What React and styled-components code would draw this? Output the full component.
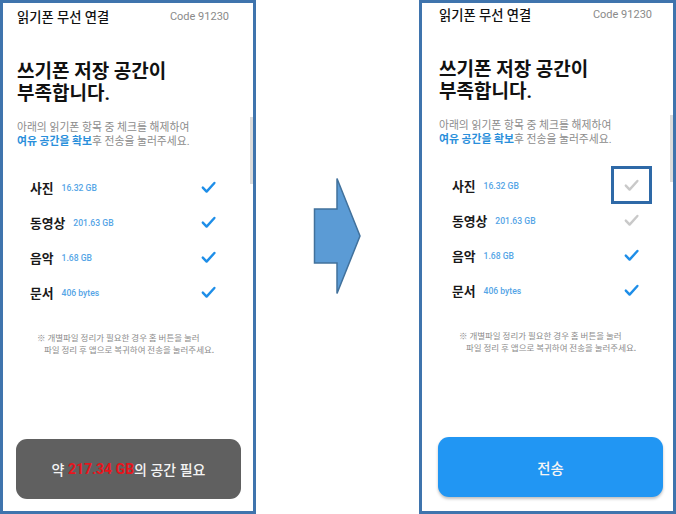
import React from "react";
import styled, { createGlobalStyle } from "styled-components";

const Global = createGlobalStyle`
  html, body { margin: 0; padding: 0; background: #ffffff; }
  body { font-family: Roboto, "Noto Sans CJK KR", sans-serif; }
  * { box-sizing: border-box; }
`;

const Stage = styled.div`
  display: flex;
  flex-direction: row;
  width: 676px;
  height: 514px;
  background: #ffffff;
`;

const Phone = styled.div`
  position: relative;
  width: ${(p) => p.$w}px;
  height: 514px;
  border: 3px solid #3f74ad;
  background: #ffffff;
  display: flex;
  flex-direction: column;
  padding: ${(p) => p.$top}px ${(p) => p.$padR}px 0 ${(p) => p.$padL}px;
  overflow: hidden;
  flex-shrink: 0;
`;

const ScrollThumb = styled.div`
  position: absolute;
  right: 0;
  top: ${(p) => p.$y}px;
  width: 3px;
  height: 67px;
  background: #dcdcdc;
`;

const Header = styled.div`
  display: flex;
  justify-content: space-between;
  align-items: center;
  height: 20px;
`;

const HeaderTitle = styled.span`
  font-size: 13.3px;
  font-weight: 500;
  color: #111111;
`;

const Code = styled.span`
  font-family: Roboto, sans-serif;
  font-size: 11px;
  color: #8a8a8a;
`;

const Title = styled.h1`
  margin: 35px 0 0 0;
  font-size: 19px;
  line-height: 22px;
  font-weight: 700;
  color: #111111;
`;

const Subtitle = styled.p`
  margin: 16px 0 0 0;
  font-size: 10.8px;
  line-height: 14px;
  color: #8c8c8c;
  white-space: nowrap;
`;

const Highlight = styled.span`
  color: #2a8fdb;
  font-weight: 700;
`;

const List = styled.div`
  margin-top: 21px;
  display: flex;
  flex-direction: column;
  padding: 0 14px 0 13px;
`;

const Row = styled.div`
  display: flex;
  align-items: center;
  height: 35px;
`;

const Label = styled.span`
  font-size: 12.8px;
  font-weight: 700;
  color: #1a1a1a;
`;

const Size = styled.span`
  margin-left: 8px;
  font-family: Roboto, sans-serif;
  font-size: 8.6px;
  font-weight: 500;
  color: #55a5e6;
  flex: 1;
`;

const CheckWrap = styled.span`
  position: relative;
  display: flex;
  width: 13px;
  height: 11px;
`;

const FocusBox = styled.span`
  position: absolute;
  left: -14px;
  top: -14px;
  width: 41px;
  height: 38px;
  border: 3px solid #2e69a7;
`;

const Note = styled.div`
  margin-top: 21px;
  padding-left: 20px;
  font-family: "Noto Sans CJK KR", sans-serif;
  font-size: 8.5px;
  line-height: 12px;
  color: #8c8c8c;
  white-space: nowrap;
`;

const NoteLine = styled.div`
  padding-left: ${(p) => p.$indent}px;
`;

const Action = styled.div`
  margin: 84px 0 0 -1px;
  width: 225px;
  height: 60px;
  border-radius: 11px;
  display: flex;
  align-items: center;
  justify-content: center;
  background: ${(p) => (p.$variant === "blue" ? "#2196f3" : "#606060")};
  box-shadow: ${(p) =>
    p.$variant === "blue" ? "0 2px 3px rgba(0,0,0,0.25)" : "none"};
  color: #f4f4f4;
  font-size: ${(p) => (p.$variant === "blue" ? "14.4px" : "14px")};
  font-weight: 500;
  white-space: nowrap;
`;

const Red = styled.span`
  color: #e8141c;
  font-weight: 700;
`;

const ArrowCol = styled.div`
  flex: 1;
  display: flex;
  justify-content: center;
  align-items: flex-start;
  padding-top: 177px;
`;

const rows = [
  { label: "사진", size: "16.32 GB" },
  { label: "동영상", size: "201.63 GB" },
  { label: "음악", size: "1.68 GB" },
  { label: "문서", size: "406 bytes" },
];

function Check({ on }) {
  return (
    <svg width="13" height="11" viewBox="0 0 13 11" style={{ overflow: "visible" }}>
      <polyline
        points="0.8,5.6 4.6,9.6 12.4,1"
        fill="none"
        stroke={on ? "#1e8ee8" : "#c9c9c9"}
        strokeWidth="2.4"
        strokeLinecap="round"
        strokeLinejoin="round"
      />
    </svg>
  );
}

function Screen({ w, top, padL, padR, checks, focus, scrollY, variant }) {
  return (
    <Phone $w={w} $top={top} $padL={padL} $padR={padR}>
      <ScrollThumb $y={scrollY} />
      <Header>
        <HeaderTitle>읽기폰 무선 연결</HeaderTitle>
        <Code>Code 91230</Code>
      </Header>
      <Title>
        쓰기폰 저장 공간이
        <br />
        부족합니다.
      </Title>
      <Subtitle>
        아래의 읽기폰 항목 중 체크를 해제하여
        <br />
        <Highlight>여유 공간을 확보</Highlight>후 전송을 눌러주세요.
      </Subtitle>
      <List>
        {rows.map((r, i) => (
          <Row key={r.label}>
            <Label>{r.label}</Label>
            <Size>{r.size}</Size>
            <CheckWrap>
              <Check on={checks[i]} />
              {focus === i && <FocusBox />}
            </CheckWrap>
          </Row>
        ))}
      </List>
      <Note>
        <NoteLine $indent={0}>※ 개별파일 정리가 필요한 경우 홈 버튼을 눌러</NoteLine>
        <NoteLine $indent={7}>파일 정리 후 앱으로 복귀하여 전송을 눌러주세요.</NoteLine>
      </Note>
      {variant === "gray" ? (
        <Action $variant="gray">
          약&nbsp;<Red>217.34 GB</Red>의 공간 필요
        </Action>
      ) : (
        <Action $variant="blue">전송</Action>
      )}
    </Phone>
  );
}

export default function App() {
  return (
    <>
      <Global />
      <Stage>
        <Screen
          w={256}
          top={3}
          padL={14}
          padR={24}
          checks={[true, true, true, true]}
          focus={-1}
          scrollY={114}
          variant="gray"
        />
        <ArrowCol>
          <svg width="49" height="118" viewBox="0 0 49 118">
            <polygon
              points="1.5,32 24,32 24,1.5 47,59 24,116.5 24,86 1.5,86"
              fill="#5b9bd5"
              stroke="#41719c"
              strokeWidth="1.5"
              strokeLinejoin="miter"
            />
          </svg>
        </ArrowCol>
        <Screen
          w={257}
          top={1}
          padL={17}
          padR={21}
          checks={[false, false, true, true]}
          focus={0}
          scrollY={112}
          variant="blue"
        />
      </Stage>
    </>
  );
}
